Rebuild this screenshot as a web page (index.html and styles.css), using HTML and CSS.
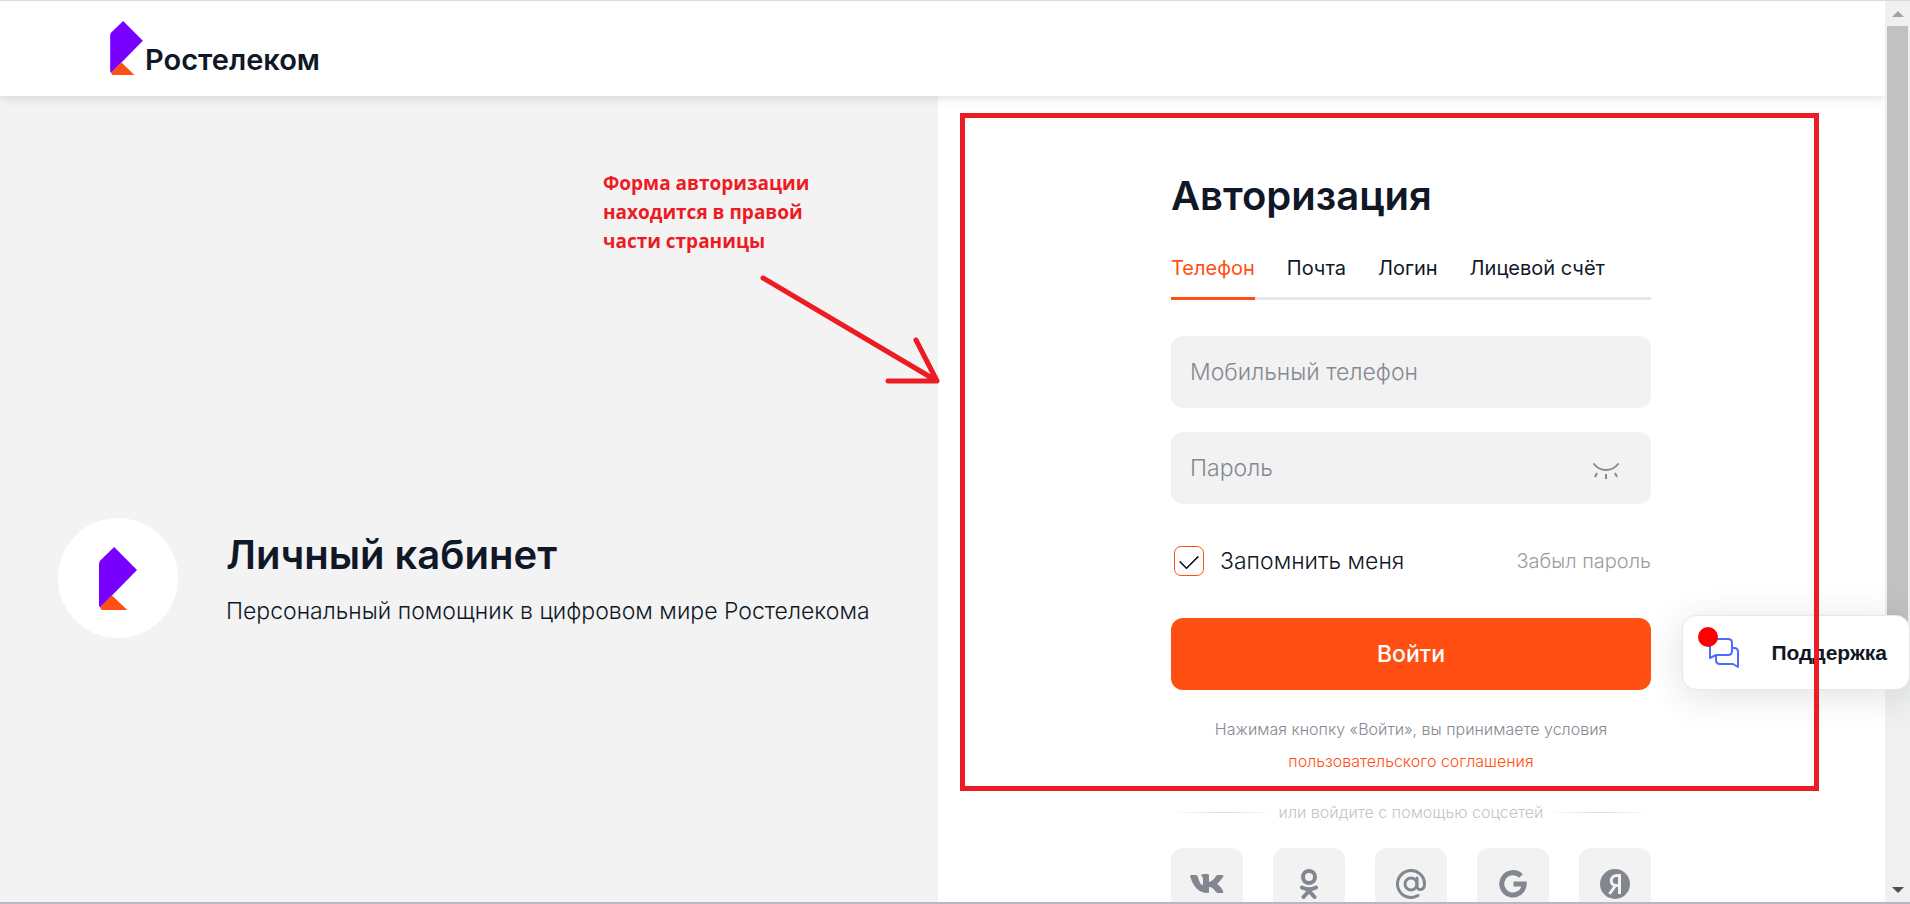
FILE: index.html
```html
<!DOCTYPE html>
<html lang="ru">
<head>
<meta charset="utf-8">
<title>Ростелеком — Авторизация</title>
<meta name="viewport" content="width=device-width, initial-scale=1">
<link rel="stylesheet" href="styles.css">
</head>
<body>
<svg class="sprite" aria-hidden="true">
  <symbol id="mark" viewBox="0 0 98 162">
    <path fill="#7700ff" d="M0 45Q0 38 4 34L39 0 98 59 3 156Q0 153 0 148Z"/>
    <path fill="#ff4f12" d="M3 156L33 124 73 162H8Q4 161 3 156Z"/>
  </symbol>
</svg>
<div class="window">
  <div class="page">
    <header class="header">
      <a class="brand" href="#"><svg class="brand-mark" aria-hidden="true"><use href="#mark"/></svg><span class="brand-name">Ростелеком</span></a>
    </header>
    <main class="columns">
      <section class="about">
        <div class="about-badge"><svg class="about-mark" aria-hidden="true"><use href="#mark"/></svg></div>
        <div class="about-text">
          <h2 class="title">Личный кабинет</h2>
          <p class="subtitle">Персональный помощник в цифровом мире Ростелекома</p>
        </div>
      </section>
      <section class="auth">
        <form class="form">
          <h1 class="title">Авторизация</h1>
          <div class="tabs">
            <button class="tab tab-active" type="button">Телефон</button>
            <button class="tab" type="button">Почта</button>
            <button class="tab" type="button">Логин</button>
            <button class="tab" type="button">Лицевой счёт</button>
          </div>
          <div class="fields">
            <div class="field">
              <input class="input" id="phone" type="tel" placeholder="Мобильный телефон" aria-label="Мобильный телефон">
            </div>
            <div class="field">
              <input class="input" id="password" type="password" placeholder="Пароль" aria-label="Пароль">
              <button class="eye" type="button" aria-label="Показать пароль">
                <svg width="28" height="18" viewBox="0 0 28 18" fill="none" stroke="#858992" stroke-width="2" stroke-linecap="round"><path d="M2 2C8 10 20 10 26 2"/><path stroke-linecap="butt" d="M5 11L3 15M14 12v5M23 11L25 15"/></svg>
              </button>
            </div>
          </div>
          <div class="options">
            <label class="remember" for="remember"><input class="check" id="remember" type="checkbox" checked>Запомнить меня</label>
            <a class="forgot" href="#">Забыл пароль</a>
          </div>
          <button class="submit" type="submit">Войти</button>
          <p class="terms">Нажимая кнопку «Войти», вы принимаете условия <a class="terms-link" href="#">пользовательского соглашения</a></p>
          <div class="divider"><span>или войдите с помощью соцсетей</span></div>
          <div class="socials">
            <a class="social" href="#" aria-label="ВКонтакте"><svg width="34" height="20" viewBox="0 0 34 20"><path fill="currentColor" d="M18 19C8 19 3 12 0 2Q0 1 1 1H6Q7 1 8 3C9 8 11 11 13 11V5Q13 3 11 1Q12 0 14 0H18Q19 0 19 2V8C22 7 25 4 26 2Q27 1 28 1H32Q34 1 33 3C31 6 29 8 27 10C30 12 32 14 33 17Q34 19 32 19H28Q27 19 26 18C24 15 22 13 19 13V18Q19 19 18 19Z"/></svg></a>
            <a class="social" href="#" aria-label="Одноклассники"><svg width="18" height="30" viewBox="0 0 18 30" fill="none" stroke="currentColor" stroke-width="4" stroke-linecap="round"><circle cx="9" cy="8" r="6"/><path d="M2 18.500Q9 22 16 18.500M9 22L3.500 28M9 22L14.500 28"/></svg></a>
            <a class="social" href="#" aria-label="Mail.ru"><svg width="30" height="30" viewBox="0 0 30 30" fill="none" stroke="currentColor" stroke-width="3"><circle cx="15" cy="15" r="6"/><path stroke-linecap="round" d="M21 9V17C21 22 28.500 22 28.500 15A13.500 13.500 0 1 0 22 26.500"/></svg></a>
            <a class="social" href="#" aria-label="Google"><svg width="28" height="28" viewBox="0 0 28 28" fill="none" stroke="currentColor" stroke-width="5"><path d="M22 6A11.200 11.200 0 1 0 25.200 14V14H14.500"/></svg></a>
            <a class="social" href="#" aria-label="Яндекс"><svg width="30" height="30" viewBox="0 0 30 30"><circle cx="15" cy="15" r="15" fill="currentColor"/><path fill="none" stroke="#f2f2f2" stroke-width="3" d="M19.500 25V6.500H17C9.500 6.500 9.500 16.500 16 16.500H19.500M15.500 16.500L9.500 25"/></svg></a>
          </div>
        </form>
      </section>
    </main>
  </div>
  <div class="scrollbar" aria-hidden="true">
    <svg width="12" height="6"><path fill="#a3a3a3" d="M0 6L6 0 12 6Z"/></svg>
    <div class="thumb"></div>
    <svg width="12" height="6"><path fill="#505050" d="M0 0H12L6 6Z"/></svg>
  </div>
  <button class="support" type="button">
    <span class="support-dot"></span>
    <svg width="32" height="32" viewBox="0 0 32 32" fill="none" stroke="#4d6bff" stroke-width="2" stroke-linejoin="round"><path d="M6 2H19Q23 2 23 6V14Q23 18 19 18H7L1 21V7Q1 2 6 2Z"/><path d="M23 11H25Q29 11 29 15V30L24 27H11Q7 27 7 23V18"/></svg>
    <span>Поддержка</span>
  </button>
  <div class="frame"></div>
  <p class="note">Форма авторизации<br>находится в правой<br>части страницы</p>
  <svg class="arrow" width="182" height="112" viewBox="0 0 182 112" fill="none" stroke="#ed1c24" stroke-width="5" stroke-linecap="round" stroke-linejoin="round" aria-hidden="true"><path d="M4 5L178 108M157 67L178 108H129"/></svg>
</div>
</body>
</html>
```
FILE: styles.css
```css
* { box-sizing: border-box; }

body {
  margin: 0;
  font-family: Inter, "Open Sans", sans-serif;
  font-weight: 300;
  color: #101828;
  background: #fff;
}

h1, h2, p { margin: 0; }
a { color: inherit; text-decoration: none; }
button { padding: 0; border: 0; background: none; color: inherit; font: inherit; }

.sprite { position: absolute; width: 0; height: 0; }

.window {
  position: relative;
  display: flex;
  height: 100vh;
  overflow: hidden;
  border-top: 1px solid #dadada;
  border-bottom: 2px solid #b8b8c4;
}

.page { flex: 1; min-width: 0; overflow: hidden; }

.header {
  position: relative;
  display: flex;
  align-items: flex-end;
  height: 95px;
  padding: 0 110px 21px;
  background: #fff;
  box-shadow: 0 1px 10px rgba(16, 24, 60, .16);
}
.brand { display: flex; align-items: flex-end; gap: 2px; }
.brand-mark { width: 33px; height: 54px; }
.brand-name { font-size: 29px; line-height: 30px; font-weight: 600; }

.columns { display: grid; grid-template-columns: minmax(0, 938fr) minmax(0, 947fr); }

.about {
  display: flex;
  align-items: center;
  gap: 48px;
  padding: 0 58px;
  background: #f3f3f3;
}
.about-badge {
  display: flex;
  flex: none;
  align-items: center;
  justify-content: center;
  width: 120px;
  height: 120px;
  border-radius: 50%;
  background: #fff;
}
.about-mark { width: 38px; height: 63px; }
.about-text { padding-top: 2px; white-space: nowrap; }

.title { font-size: 40px; line-height: 48px; font-weight: 600; }
.subtitle { margin-top: 16px; font-size: 23px; line-height: 32px; }

.auth { display: flex; justify-content: center; padding: 76px 25px 140px 24px; }
.form { width: 480px; }

.tabs {
  display: flex;
  gap: 32px;
  margin-top: 36px;
  box-shadow: inset 0 -3px #e7e7e7;
}
.tab {
  padding-bottom: 17px;
  border-bottom: 3px solid transparent;
  font-size: 20px;
  line-height: 24px;
  font-weight: 400;
  white-space: nowrap;
}
.tab-active { color: #ff4f12; border-color: #ff4f12; }

.fields { display: grid; gap: 24px; margin-top: 36px; }
.field {
  display: flex;
  align-items: center;
  height: 72px;
  padding: 0 31px 0 19px;
  border-radius: 12px;
  background: #f2f2f2;
}
.input {
  flex: 1;
  min-width: 0;
  padding: 0;
  border: 0;
  outline: 0;
  background: none;
  color: inherit;
  font: inherit;
  font-size: 23px;
  line-height: 32px;
}
.input::placeholder { color: #858992; opacity: 1; }
.eye { display: flex; padding-top: 5px; }

.options {
  display: flex;
  align-items: center;
  justify-content: space-between;
  margin: 42px 0;
  padding-left: 3px;
}
.remember { display: flex; align-items: center; gap: 16px; font-size: 23px; line-height: 30px; }
.check {
  display: grid;
  place-items: center;
  width: 30px;
  height: 30px;
  margin: 0;
  border: 1px solid #ff4f12;
  border-radius: 7px;
  appearance: none;
}
.check:checked::before {
  content: "";
  width: 16px;
  height: 9px;
  border: solid #101828;
  border-width: 0 0 2px 2px;
  border-radius: 1px;
  transform: translateY(-2px) rotate(-45deg);
}
.forgot { color: #999ca3; font-size: 20px; line-height: 30px; }

.submit {
  display: block;
  width: 100%;
  height: 72px;
  border-radius: 12px;
  background: #ff4f12;
  color: #fff;
  font-size: 23px;
  font-weight: 500;
}

.terms {
  margin-top: 23px;
  color: #858992;
  font-size: 16px;
  line-height: 32px;
  text-align: center;
}
.terms-link { display: block; color: #ff4f12; }

.divider {
  display: flex;
  align-items: center;
  gap: 4px;
  margin-top: 23px;
  color: #c3c5c9;
  font-size: 16px;
  line-height: 24px;
  white-space: nowrap;
}
.divider::before,
.divider::after {
  content: "";
  flex: 1;
  height: 1px;
  background: linear-gradient(90deg, #fff, #dcdcdc, #fff);
}

.socials { display: flex; justify-content: space-between; margin-top: 24px; }
.social {
  display: flex;
  align-items: center;
  justify-content: center;
  width: 72px;
  height: 72px;
  border-radius: 12px;
  background: #f2f2f2;
  color: #82868f;
}

.scrollbar {
  display: flex;
  flex: none;
  flex-direction: column;
  align-items: center;
  width: 25px;
  padding: 10px 0 9px;
  background: #f0f0f0;
}
.thumb { width: 21px; height: 68%; margin: 9px 0 auto; background: #c1c1c1; }

.support {
  position: absolute;
  top: 614px;
  right: 0;
  display: flex;
  align-items: center;
  gap: 30px;
  height: 75px;
  padding: 0 22px 0 26px;
  border: 1px solid #e6e8e8;
  border-radius: 14px;
  background: #fff;
  box-shadow: 0 6px 36px rgba(16, 40, 60, .14);
  font-family: "Liberation Sans", Arial, sans-serif;
  font-size: 21px;
  font-weight: 700;
}
.support-dot {
  position: absolute;
  top: 11px;
  left: 15px;
  width: 20px;
  height: 20px;
  border-radius: 50%;
  background: #f00;
}

.frame {
  position: absolute;
  top: 112px;
  right: 91px;
  width: 859px;
  height: 678px;
  border: 5px solid #ed1c24;
  pointer-events: none;
}
.note {
  position: absolute;
  top: 168px;
  left: 603px;
  color: #ed1c24;
  font-family: "Open Sans", "Noto Sans", sans-serif;
  font-size: 19px;
  line-height: 29px;
  font-weight: 700;
}
.arrow { position: absolute; top: 272px; left: 759px; }
```
